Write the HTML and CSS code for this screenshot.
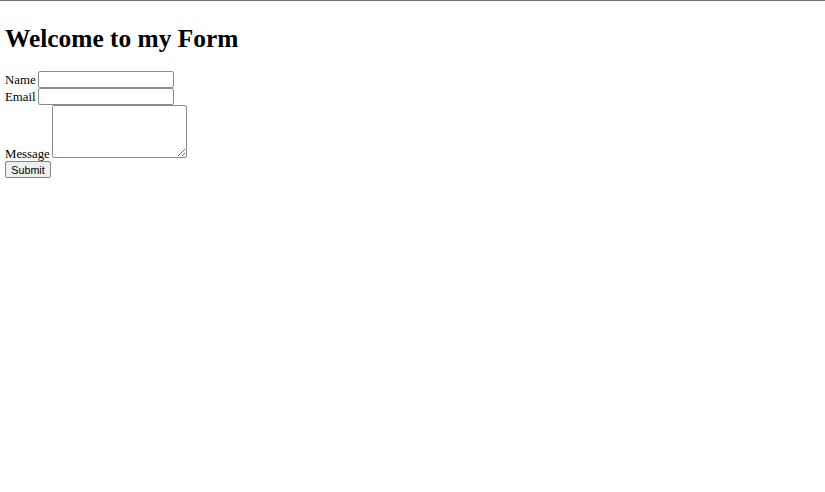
FILE: index.html
```
<!DOCTYPE html>
<html lang="en">
<head>
  <meta charset="UTF-8">
  <title>My Form</title>
  <link rel="stylesheet" href="styles.css">
</head>
<body>

  <h1>Welcome to my Form</h1>

  <form action="#" method="POST">
    <label for="name">Name</label>
    <input type="text" name="name" id="name"><br>

    <label for="email">Email</label>
    <input type="email" name="email" id="email"><br>

    <label for="message">Message</label>
    <textarea name="message" id="message"></textarea><br>

    <button type="submit">Submit</button>
  </form>

</body>
</html>
```

FILE: styles.css
```
html {
  border-top: 1px solid #70707f;
  background: white;
}

body {
  font-family: "Liberation Serif", "Times New Roman", serif;
  font-size: 12.8px;
  margin: 6px 5px;
  color: black;
}

h1 {
  font-size: 25.4px;
  margin: 17px 0 18px;
}

label {
  margin-right: -1px;
}

input, textarea {
  box-sizing: border-box;
  font-family: "Liberation Sans", Arial, sans-serif;
  font-size: 10.7px;
  border: 1px solid #8a8a8a;
  border-radius: 2px;
  padding: 1px 2px;
  margin: 0;
}

input {
  width: 136px;
  height: 17px;
}

textarea {
  width: 135px;
  height: 53px;
  vertical-align: baseline;
}

button {
  box-sizing: border-box;
  font-family: "Liberation Sans", Arial, sans-serif;
  font-size: 10.7px;
  height: 17px;
  width: 46px;
  padding: 0 5px;
  margin: -1px 0 0;
  vertical-align: top;
  background: #efefef;
  border: 1px solid #858585;
  border-radius: 2px;
  color: black;
}
```
